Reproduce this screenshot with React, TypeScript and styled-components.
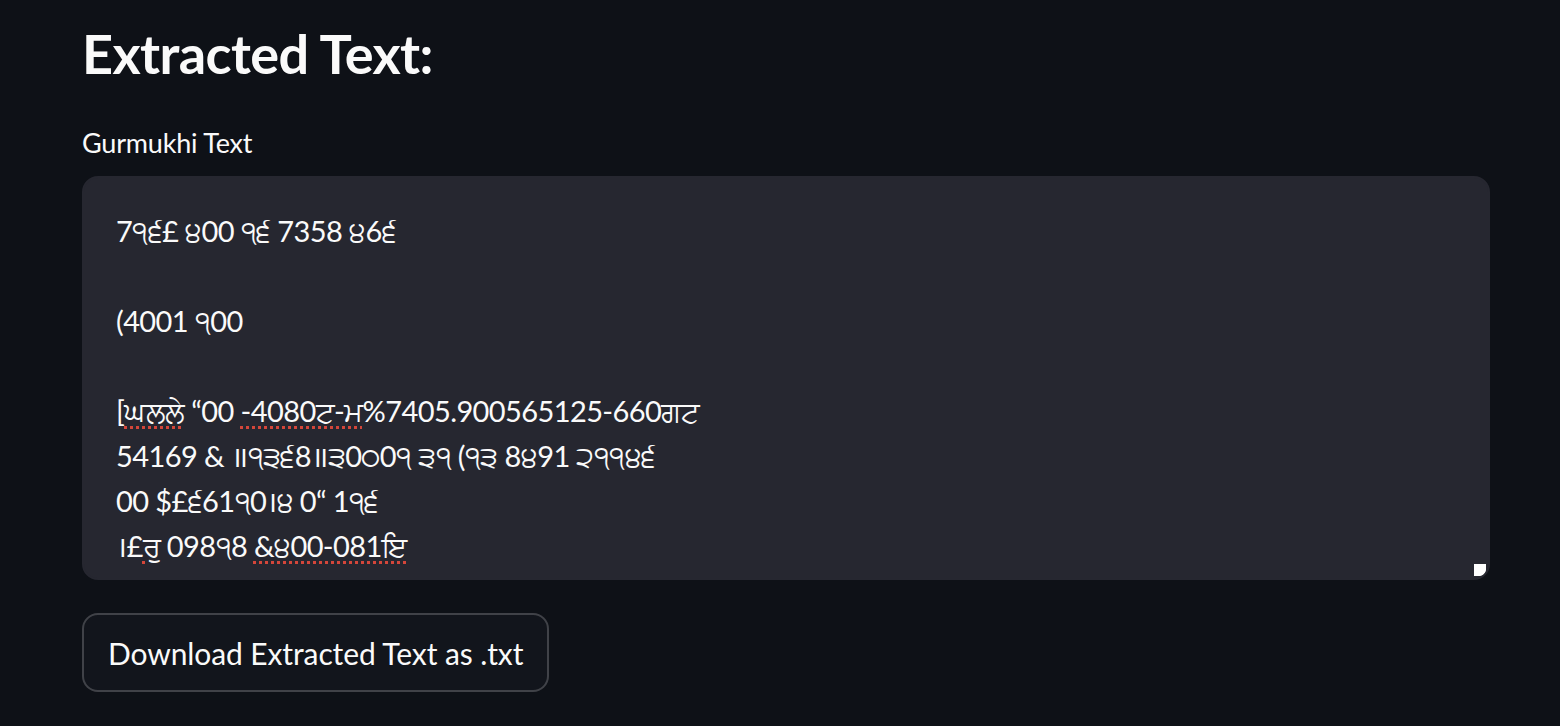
import React from 'react';
import styled, { createGlobalStyle } from 'styled-components';

const GlobalStyle = createGlobalStyle`
  html, body {
    margin: 0;
    padding: 0;
    background: #0e1117;
  }
  body {
    color: #fafafa;
    font-family: Lato, "Open Sans", "Noto Sans", sans-serif;
  }
`;

const Main = styled.main`
  display: flex;
  flex-direction: column;
  padding: 22px 70px 0 82px;
  width: 1408px;
`;

const Title = styled.h3`
  font-size: 54px;
  font-weight: 700;
  line-height: 1.2;
  margin: 0 0 40px;
  letter-spacing: -0.6px;
`;

const Field = styled.div`
  display: flex;
  flex-direction: column;
  gap: 17px;
`;

const Label = styled.label`
  font-size: 27px;
  line-height: 1.2;
  letter-spacing: -0.2px;
`;

const TextBox = styled.div`
  position: relative;
  box-sizing: border-box;
  height: 404px;
  padding: 30px 32px;
  background: #262730;
  border: 2px solid #262730;
  border-radius: 16px;
  overflow: hidden;
  font-size: 29px;
  line-height: 45px;
  letter-spacing: -0.6px;
  white-space: pre;
`;

const Misspelled = styled.span`
  text-decoration: underline dotted #d4463a;
  text-decoration-thickness: 3px;
  text-underline-offset: 4px;
`;

const Resizer = styled.span`
  position: absolute;
  right: 2px;
  bottom: 2px;
  width: 12px;
  height: 12px;
  background: #ffffff;
  border-bottom-right-radius: 6px;
`;

const Button = styled.button`
  align-self: flex-start;
  margin-top: 33px;
  min-height: 79px;
  padding: 8px 24px;
  background: #12151c;
  color: #fafafa;
  border: 2px solid rgba(250, 250, 250, 0.2);
  border-radius: 16px;
  font-family: inherit;
  font-size: 30px;
  letter-spacing: -0.1px;
  cursor: pointer;
`;

export default function App() {
  return (
    <>
      <GlobalStyle />
      <Main>
        <Title>Extracted Text:</Title>
        <Field>
          <Label>Gurmukhi Text</Label>
          <TextBox role="textbox" aria-multiline="true">
            {'7੧੬£ ੪00 ੧੬ 7358 ੪6੬\n\n(4001 ੧00\n\n['}
            <Misspelled>ਘਲਲੇ</Misspelled>
            {' “00 '}
            <Misspelled>-4080ਟ-ਮ</Misspelled>
            {'%7405.900565125-660ਗਟ\n54169 & ॥੧੩੬8॥੩0੦0੧ ੩੧ (੧੩ 8੪91 ੨੧੧੪੬\n00 $£੬61੧0।੪ 0“ 1੧੬\n।£'}
            <Misspelled>ਰੁ</Misspelled>
            {' 098੧8 '}
            <Misspelled>&੪00-081ਇ</Misspelled>
            <Resizer />
          </TextBox>
        </Field>
        <Button>Download Extracted Text as .txt</Button>
      </Main>
    </>
  );
}
